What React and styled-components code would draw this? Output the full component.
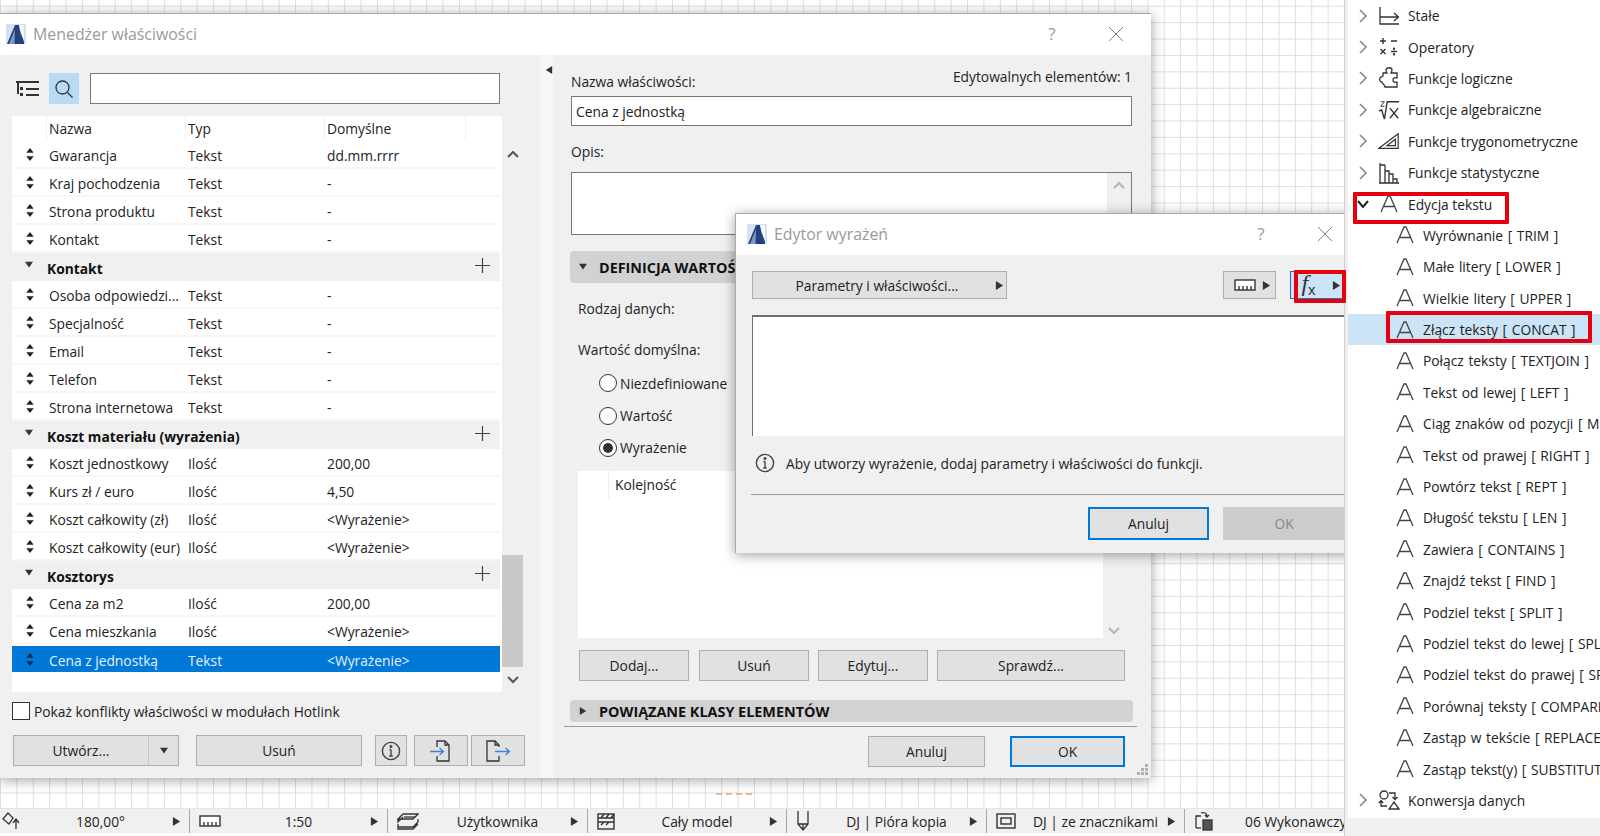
import React from "react";
import styled, { createGlobalStyle } from "styled-components";

const GlobalStyle = createGlobalStyle`
  * { box-sizing: border-box; }
  html, body { margin: 0; padding: 0; background: #fff; }
  body {
    font-family: "Open Sans", "Noto Sans", "Liberation Sans", sans-serif;
    font-size: 13.8px;
    color: #222;
  }
`;

const propertyGroups = [
  {
    rows: [
      ["Gwarancja", "Tekst", "dd.mm.rrrr"],
      ["Kraj pochodzenia", "Tekst", "-"],
      ["Strona produktu", "Tekst", "-"],
      ["Kontakt", "Tekst", "-"],
    ],
  },
  {
    title: "Kontakt",
    rows: [
      ["Osoba odpowiedzi...", "Tekst", "-"],
      ["Specjalność", "Tekst", "-"],
      ["Email", "Tekst", "-"],
      ["Telefon", "Tekst", "-"],
      ["Strona internetowa", "Tekst", "-"],
    ],
  },
  {
    title: "Koszt materiału (wyrażenia)",
    rows: [
      ["Koszt jednostkowy", "Ilość", "200,00"],
      ["Kurs zł / euro", "Ilość", "4,50"],
      ["Koszt całkowity (zł)", "Ilość", "<Wyrażenie>"],
      ["Koszt całkowity (eur)", "Ilość", "<Wyrażenie>"],
    ],
  },
  {
    title: "Kosztorys",
    rows: [
      ["Cena za m2", "Ilość", "200,00"],
      ["Cena mieszkania", "Ilość", "<Wyrażenie>"],
      ["Cena z jednostką", "Tekst", "<Wyrażenie>", true],
    ],
  },
];

const textFunctions = [
  "Wyrównanie [ TRIM ]",
  "Małe litery [ LOWER ]",
  "Wielkie litery [ UPPER ]",
  "Złącz teksty [ CONCAT ]",
  "Połącz teksty [ TEXTJOIN ]",
  "Tekst od lewej [ LEFT ]",
  "Ciąg znaków od pozycji [ MID ]",
  "Tekst od prawej [ RIGHT ]",
  "Powtórz tekst [ REPT ]",
  "Długość tekstu [ LEN ]",
  "Zawiera [ CONTAINS ]",
  "Znajdź tekst [ FIND ]",
  "Podziel tekst [ SPLIT ]",
  "Podziel tekst do lewej [ SPLITLEFT ]",
  "Podziel tekst do prawej [ SPLITRIGHT ]",
  "Porównaj teksty [ COMPARE ]",
  "Zastąp w tekście [ REPLACE ]",
  "Zastąp tekst(y) [ SUBSTITUTE ]",
];

const Page = styled.div`
  position: relative;
  width: 1600px;
  height: 836px;
  display: grid;
  grid-template-columns: 1344px 256px;
  overflow: hidden;
`;

const LeftColumn = styled.div`
  display: flex;
  flex-direction: column;
  min-width: 0;
`;

const Canvas = styled.div`
  position: relative;
  flex: 1;
  overflow: hidden;
  background-color: #fff;
  background-image: linear-gradient(to right, #dedede 1px, transparent 1px),
    linear-gradient(to bottom, #dedede 1px, transparent 1px);
  background-size: 16.4px 16.4px;
  background-position: 0 5.8px;
`;

const CanvasMark = styled.div`
  position: absolute;
  left: 716px;
  top: 793px;
  width: 36px;
  border-top: 2px dashed #eeb68c;
`;

const Window = styled.div`
  position: absolute;
  left: ${({ $x }) => $x}px;
  top: ${({ $y }) => $y}px;
  width: ${({ $w }) => $w}px;
  height: ${({ $h }) => $h}px;
  display: flex;
  flex-direction: column;
  background: #f0f0f0;
  border-top: 1px solid #a9a9a9;
  border-left: ${({ $framed }) => ($framed ? "1px solid #a9a9a9" : "none")};
  box-shadow: 0 2px 12px rgba(0, 0, 0, 0.38);
`;

const TitleBar = styled.div`
  flex: none;
  height: 41px;
  display: flex;
  align-items: center;
  background: #fff;
  padding: 0 26px 2px ${({ $pad }) => $pad}px;
`;

const TitleText = styled.div`
  flex: 1;
  margin-left: 7px;
  font-size: 15.9px;
  color: #9a9a9a;
`;

const HelpMark = styled.span`
  width: 18px;
  margin-right: 46px;
  text-align: center;
  font-size: 17px;
  color: #9a9a9a;
`;

const WindowBody = styled.div`
  flex: 1;
  display: flex;
  min-height: 0;
`;

const LeftPane = styled.div`
  flex: none;
  width: 540px;
  padding-top: 18px;
`;

const SearchBar = styled.div`
  display: flex;
  align-items: center;
  height: 31px;
  padding-left: 16px;
`;

const ViewToggle = styled.div`
  width: 30px;
  height: 31px;
  margin: 0 11px 0 9px;
  display: flex;
  align-items: center;
  justify-content: center;
  background: #b9daf4;
`;

const SearchInput = styled.div`
  width: 410px;
  height: 31px;
  background: #fff;
  border: 1px solid #7a7a7a;
`;

const ListArea = styled.div`
  display: flex;
  margin: 12px 17px 0 12px;
  height: 576px;
`;

const List = styled.div`
  width: 490px;
  background: #fff;
`;

const listColumns = "34px 139px 139px 141px 1fr";

const ListHeader = styled.div`
  display: grid;
  grid-template-columns: ${listColumns};
  height: 25px;
  align-items: stretch;
  width: 488px;
`;

const HeaderCell = styled.div`
  display: flex;
  align-items: center;
  padding-left: 2px;
  border-left: ${({ $first }) => ($first ? "none" : "1px solid #f0f0f0")};
`;

const PropertyRow = styled.div`
  display: grid;
  grid-template-columns: ${listColumns};
  align-items: center;
  height: 28px;
  width: 488px;
  background: #fff;
  border-bottom: 2px solid #f6f6f6;
  color: #222;
  ${({ $selected }) =>
    $selected &&
    `
    background: #0078d7;
    border-top: 1px solid #fff;
    border-bottom: 1px solid #fff;
    color: #e4f1fc;
  `}
`;

const RowGrip = styled.div`
  display: flex;
  justify-content: center;
  padding-left: 1px;
  color: ${({ $selected }) => ($selected ? "#0b2a45" : "#222")};
`;

const RowCell = styled.div`
  padding: 2px 0 0 3px;
  white-space: nowrap;
`;

const GroupRow = styled.div`
  display: flex;
  align-items: center;
  height: 28px;
  width: 488px;
  background: #f0f0f0;
  font-weight: 700;
  color: #111;
`;

const GroupCaret = styled.div`
  width: 34px;
  display: flex;
  justify-content: center;
  margin-top: -4px;
`;

const GroupName = styled.div`
  flex: 1;
  padding: 2px 0 0 1px;
`;

const GroupAdd = styled.div`
  width: 35px;
  display: flex;
  justify-content: center;
  margin-top: -3px;
`;

const ScrollColumn = styled.div`
  width: 21px;
  display: flex;
  flex-direction: column;
  color: #555;
`;

const ScrollArrow = styled.div`
  flex: none;
  height: ${({ $h }) => $h}px;
  display: flex;
  align-items: center;
  justify-content: center;
`;

const ScrollThumb = styled.div`
  flex: none;
  height: 112px;
  background: #c8c8c8;
`;

const Spacer = styled.div`
  flex: 1;
`;

const CheckRow = styled.div`
  display: flex;
  align-items: center;
  gap: 4px;
  height: 18px;
  margin: 10px 0 0 12px;
`;

const CheckBox = styled.div`
  width: 18px;
  height: 18px;
  background: #fff;
  border: 1px solid #333;
`;

const CheckLabel = styled.div`
  padding-top: 1px;
  white-space: nowrap;
`;

const ButtonRow = styled.div`
  display: flex;
  margin: ${({ $m }) => $m};
  justify-content: ${({ $end }) => ($end ? "flex-end" : "flex-start")};
`;

const Button = styled.div`
  flex: none;
  width: ${({ $w }) => $w}px;
  height: ${({ $h }) => $h || 31}px;
  margin-right: ${({ $mr }) => $mr || 0}px;
  display: flex;
  align-items: center;
  justify-content: center;
  background: ${({ $disabled, $active }) =>
    $disabled ? "#cccccc" : $active ? "#cce4f7" : "#e1e1e1"};
  border: ${({ $primary, $disabled, $active }) =>
    $primary
      ? "2px solid #0078d7"
      : $disabled
      ? "none"
      : $active
      ? "1px solid #2a6fb3"
      : "1px solid #adadad"};
  color: ${({ $disabled }) => ($disabled ? "#888" : "#222")};
`;

const SplitLabel = styled.div`
  flex: 1;
  text-align: center;
`;

const SplitCaret = styled.div`
  width: 30px;
  height: 100%;
  display: flex;
  align-items: center;
  justify-content: center;
  border-left: 1px solid #c4c4c4;
`;

const MenuCaret = styled.div`
  flex: none;
  width: 14px;
  display: flex;
  justify-content: center;
`;

const Sash = styled.div`
  flex: none;
  width: 13px;
  padding: 11px 0 0 5px;
  background: #f6f6f6;
  color: #222;
`;

const RightPane = styled.div`
  flex: 1;
  position: relative;
  padding: 0 19px 0 18px;
  min-width: 0;
`;

const NameRow = styled.div`
  display: flex;
  justify-content: space-between;
  height: 41px;
  padding-top: 12px;
`;

const NameLabel = styled.div`
  padding-top: 5px;
`;

const TextInput = styled.div`
  height: 30px;
  padding-left: 4px;
  display: flex;
  align-items: center;
  background: #fff;
  border: 1px solid #777;
`;

const FieldLabel = styled.div`
  height: 20px;
  line-height: 20px;
  margin: ${({ $m }) => $m};
`;

const NoteBox = styled.div`
  height: 63px;
  margin-top: 10px;
  display: flex;
  justify-content: flex-end;
  background: #fff;
  border: 1px solid #777;
`;

const NoteScroll = styled.div`
  width: 24px;
  padding-top: 8px;
  display: flex;
  justify-content: center;
  background: #f0f0f0;
  color: #b5b5b5;
`;

const SectionBar = styled.div`
  height: ${({ $h }) => $h}px;
  margin: ${({ $m }) => $m};
  padding-left: 9px;
  display: flex;
  align-items: center;
  gap: 12px;
  border-radius: 4px;
  background: #d2d2d2;
  font-weight: 700;
  font-size: 14.4px;
  color: #111;
  white-space: nowrap;
`;

const RadioRow = styled.div`
  display: flex;
  align-items: center;
  gap: 3px;
  height: 32.4px;
  padding-left: 28px;
`;

const Radio = styled.div`
  width: 18px;
  height: 18px;
  display: flex;
  align-items: center;
  justify-content: center;
  border-radius: 50%;
  background: #fff;
  border: 1px solid #333;
  &::after {
    content: "";
    display: ${({ $checked }) => ($checked ? "block" : "none")};
    width: 10px;
    height: 10px;
    border-radius: 50%;
    background: #333;
  }
`;

const OrderArea = styled.div`
  display: flex;
  height: 167px;
  margin: 7px 8px 0 7px;
`;

const OrderTable = styled.div`
  flex: 1;
  padding-left: 30px;
  background: #fff;
`;

const OrderHead = styled.div`
  height: 28px;
  line-height: 28px;
  padding-left: 6px;
  border-left: 1px solid #eee;
`;

const OrderScroll = styled.div`
  width: 21px;
  padding: 0 0 3px 0;
  display: flex;
  align-items: flex-end;
  justify-content: center;
  color: #b5b5b5;
`;

const FootRule = styled.div`
  height: 1px;
  margin: ${({ $m }) => $m};
  background: #9a9a9a;
`;

const Grip = styled.div`
  position: absolute;
  right: 2px;
  bottom: 2px;
  color: #b0b0b0;
  line-height: 0;
`;

const ExprBody = styled.div`
  flex: 1;
  padding: 16px 6px 0 16px;
`;

const ExprToolbar = styled.div`
  display: flex;
  align-items: center;
  height: 28px;
`;

const ParamLabel = styled.div`
  flex: 1;
  padding-left: 9px;
  text-align: center;
`;

const RulerButtonInner = styled.div`
  flex: 1;
  display: flex;
  align-items: center;
  justify-content: space-between;
  padding: 0 4px 0 10px;
`;

const FxGlyph = styled.span`
  font-family: "Liberation Serif", serif;
  font-style: italic;
  font-size: 24px;
  line-height: 1;
  color: #333;
  margin: -4px 0 0 -2px;
`;

const FxSub = styled.span`
  font-family: "Liberation Sans", sans-serif;
  font-size: 15px;
  color: #333;
  margin: 8px 16px 0 0;
`;

const ExprArea = styled.div`
  height: 121px;
  margin-top: 16px;
  background: #fff;
  border-top: 2px solid #6f6f6f;
  border-left: 1px solid #6f6f6f;
`;

const HintRow = styled.div`
  display: flex;
  align-items: center;
  gap: 11px;
  height: 28px;
  margin: 13px 0 0 3px;
  white-space: nowrap;
`;

const Panel = styled.div`
  display: flex;
  flex-direction: column;
  position: relative;
  background: #f0f0f0;
  border-left: 1px solid #cfcfcf;
  padding-left: 3px;
`;

const Tree = styled.div`
  height: 818px;
  background: #fff;
  overflow: hidden;
`;

const TreeRow = styled.div`
  height: 31.4px;
  display: flex;
  align-items: center;
  padding-left: ${({ $child }) => ($child ? 48 : 9)}px;
  background: ${({ $selected }) => ($selected ? "#cce4f7" : "transparent")};
  white-space: nowrap;
  word-spacing: ${({ $child }) => ($child ? 1 : 0)}px;
  color: #222;
`;

const TreeChevron = styled.div`
  flex: none;
  width: 12px;
  margin-right: 9px;
  display: flex;
  justify-content: center;
  color: ${({ $open }) => ($open ? "#222" : "#888")};
`;

const TreeIcon = styled.div`
  flex: none;
  width: ${({ $child }) => ($child ? 18 : 22)}px;
  margin-right: ${({ $child }) => ($child ? 9 : 8)}px;
  display: flex;
  justify-content: center;
  color: #333;
`;

const StatusBar = styled.div`
  flex: none;
  height: 25px;
  display: flex;
  background: #f0f0f0;
  border-top: 1px solid #e4e4e4;
  overflow: hidden;
`;

const StatusFoot = styled.div`
  flex: none;
  height: 3px;
  background: #fafafa;
`;

const StatusCell = styled.div`
  flex: ${({ $w }) => ($w ? `none` : 1)};
  width: ${({ $w }) => ($w ? `${$w}px` : "auto")};
  display: flex;
  align-items: center;
  padding-left: ${({ $first }) => ($first ? 1 : 9)}px;
  border-right: ${({ $w }) => ($w ? "1px solid #a8a8a8" : "none")};
  min-width: 0;
  color: #333;
`;

const StatusIcon = styled.div`
  flex: none;
  width: 36px;
  display: flex;
  color: #333;
`;

const StatusText = styled.div`
  flex: 1;
  text-align: ${({ $start }) => ($start ? "left" : "center")};
  padding-left: ${({ $start }) => ($start ? 15 : 0)}px;
  white-space: nowrap;
  overflow: hidden;
  color: #222;
`;

const StatusArrow = styled.div`
  flex: none;
  width: 25px;
  display: flex;
  justify-content: center;
`;

const RedBox = styled.div`
  position: absolute;
  left: ${({ $x }) => $x}px;
  top: ${({ $y }) => $y}px;
  width: ${({ $w }) => $w}px;
  height: ${({ $h }) => $h}px;
  border: 4px solid #e6000f;
  border-radius: 1px;
  pointer-events: none;
`;

/* icons */
const Svg = ({ w = 16, h = 16, vb, children, sw = 1.2 }) => (
  <svg
    width={w}
    height={h}
    viewBox={vb || `0 0 ${w} ${h}`}
    fill="none"
    stroke="currentColor"
    strokeWidth={sw}
    style={{ display: "block" }}
  >
    {children}
  </svg>
);

const AppLogo = () => (
  <svg width="20" height="20" viewBox="0 0 20 20" style={{ display: "block", flex: "none" }}>
    <rect width="20" height="20" fill="#d9e0ee" />
    <path d="M1 20 L9 1 L13 1 L18 18 L18 20 Z" fill="#23407f" />
    <path d="M3 20 L9 5 L8.5 20 Z" fill="#7f97c6" />
    <path d="M13 1 Q14 10 18 16 L18 1 Z" fill="#f4f6fa" />
  </svg>
);

const Close = () => (
  <Svg w={18} h={18} sw={1}>
    <path d="M2 2 L16 16 M16 2 L2 16" stroke="#808080" />
  </Svg>
);

const TreeListIcon = () => (
  <Svg w={24} h={18} sw={2}>
    <path d="M0 2 H23 M2 2 V14 M10 9 H23 M10 15 H23" stroke="#333" />
    <rect x="4" y="7" width="3" height="3" fill="#333" stroke="none" />
    <rect x="4" y="13" width="3" height="3" fill="#333" stroke="none" />
  </Svg>
);

const Search = () => (
  <Svg w={20} h={20} sw={1.3}>
    <circle cx="8.5" cy="8.5" r="6.5" stroke="#333" />
    <path d="M13.5 13.5 L18.5 18.5" stroke="#333" />
  </Svg>
);

const SortGrip = () => (
  <svg width="8" height="13" viewBox="0 0 8 14" fill="currentColor" style={{ display: "block" }}>
    <path d="M4 0 L8 5 H0 Z M0 9 H8 L4 14 Z" />
  </svg>
);

const Caret = ({ dir = "down", color = "#333", s = 8 }) => {
  const points = {
    down: "0,1 10,1 5,8",
    right: "1,0 9,5 1,10",
    left: "9,0 1,5 9,10",
  };
  return (
    <svg width={s} height={s} viewBox="0 0 10 10" style={{ display: "block", flex: "none" }}>
      <polygon points={points[dir]} fill={color} />
    </svg>
  );
};

const Plus = () => (
  <Svg w={15} h={15} sw={1.2}>
    <path d="M7.5 0 V15 M0 7.5 H15" stroke="#444" />
  </Svg>
);

const ChevronV = ({ up }) => (
  <Svg w={12} h={8} sw={2}>
    <path d={up ? "M1 7 L6 2 L11 7" : "M1 1 L6 6 L11 1"} />
  </Svg>
);

const InfoCircle = () => (
  <Svg w={20} h={20} sw={1.4}>
    <circle cx="10" cy="10" r="8.6" stroke="#444" />
    <path d="M10 8.5 V15 M8.2 15 H11.8 M8.5 8.5 H10" stroke="#444" />
    <circle cx="10" cy="5.6" r="0.8" fill="#444" stroke="#444" />
  </Svg>
);

const DocIn = () => (
  <Svg w={24} h={24} sw={1.3}>
    <path d="M8 8 V2 H16 L20 6 V22 H8 V17" stroke="#333" />
    <path d="M16 2 V6 H20" stroke="#333" />
    <path d="M1 12.5 H14 M10.5 9 L14.5 12.5 L10.5 16" stroke="#3f83d6" />
  </Svg>
);

const DocOut = () => (
  <Svg w={26} h={24} sw={1.3}>
    <path d="M14 8 V6 L10 2 H2 V22 H14 V17" stroke="#333" />
    <path d="M10 2 V6 H14" stroke="#333" />
    <path d="M10 12.5 H24 M20.5 9 L24.5 12.5 L20.5 16" stroke="#3f83d6" />
  </Svg>
);

const Ruler = () => (
  <Svg w={22} h={12} sw={1.4}>
    <rect x="1" y="1" width="20" height="10" fill="#fff" stroke="#333" />
    <path d="M5 11 V7 M9 11 V7 M13 11 V7 M17 11 V7" stroke="#333" />
  </Svg>
);

const AngleIcon = () => (
  <Svg w={22} h={20} sw={1.3}>
    <path d="M2 8 L7 2 L12 7 L8 13 Z" />
    <path d="M15 18 V9 M12 12 L15 8 L18 12" />
  </Svg>
);

const LayersIcon = () => (
  <Svg w={22} h={20} sw={1.3}>
    <path d="M1 8 L6 3 H21 L16 8 Z M1 8 V11 L6 6 M1 13 L1 16 H16 L21 11 V8 M1 16 L1 18 H16 L21 13" />
    <path d="M7 6 H18" />
  </Svg>
);

const ClapIcon = () => (
  <Svg w={18} h={20} sw={1.4}>
    <rect x="1" y="3" width="16" height="15" />
    <path d="M1 7 H17 M1 11 H17 M4 7 L7 3 M9 7 L12 3 M14 7 L17 3 M4 14 L7 11 M9 14 L12 11" />
  </Svg>
);

const PenIcon = () => (
  <Svg w={14} h={22} sw={1.3}>
    <path d="M2 1 V14 L7 20 L12 14 V1 M2 14 H12 M7 14 V20" />
  </Svg>
);

const ViewIcon = () => (
  <Svg w={20} h={18} sw={1.4}>
    <rect x="1" y="2" width="18" height="14" />
    <rect x="5" y="6" width="10" height="6" />
  </Svg>
);

const BoardIcon = () => (
  <Svg w={20} h={20} sw={1.3}>
    <path d="M2 17 V5 H7 M7 2 C10 1 13 2 13 5 M11 4 L13 6 L15 4" />
    <rect x="9" y="9" width="9" height="10" fill="#555" stroke="#333" />
    <path d="M2 17 H7" />
  </Svg>
);

const ChevronRight = () => (
  <Svg w={10} h={14} sw={1.6}>
    <path d="M2 1 L8 7 L2 13" />
  </Svg>
);

const ChevronDown = () => (
  <Svg w={12} h={9} sw={2}>
    <path d="M1 1 L6 7 L11 1" />
  </Svg>
);

const ConstIcon = () => (
  <Svg w={22} h={20} sw={1.3}>
    <path d="M2 1 V18 H21 M2 11 H20 M16 7 L20.5 11 L16 15" />
  </Svg>
);

const OperatorsIcon = () => (
  <Svg w={20} h={20} sw={1.4}>
    <path d="M4 1 V7 M1 4 H7 M12 4 H18 M1.5 12 L6.5 17 M6.5 12 L1.5 17 M12 14.5 H18" />
    <circle cx="15" cy="11.8" r="0.5" fill="currentColor" />
    <circle cx="15" cy="17.2" r="0.5" fill="currentColor" />
  </Svg>
);

const PuzzleIcon = () => (
  <Svg w={22} h={22} sw={1.3}>
    <path d="M8 3 C8 0 14 0 14 3 C14 5 13 5 13 6 H19 V11 C17 10 15 11 15 13 C15 15 17 16 19 15 V20 H7 C7 17 4 17 4 15 C2 15 1 13 2 11 C3 9 5 10 5 9 V6 H9 C9 5 8 5 8 3 Z" />
  </Svg>
);

const RootIcon = () => (
  <Svg w={24} h={22} sw={1.5}>
    <path d="M1 12 L4 11 L7 21 L10 2 H23" />
    <path d="M13 9 L22 20 M22 9 L13 20" />
    <path d="M3 2 H7 L3 7 H7" strokeWidth="1" />
  </Svg>
);

const SetSquareIcon = () => (
  <Svg w={24} h={18} sw={1.3}>
    <path d="M1 17 L22 1 V17 Z M10 14 L19 7 V14 Z" />
  </Svg>
);

const BarsIcon = () => (
  <Svg w={22} h={22} sw={1.3}>
    <path d="M1 21 H21 M2 1 V21 M7 3 H2 M7 3 V21 M7 9 H11 V21 M11 12 H15 V21 M15 17 H19 V21" />
  </Svg>
);

const LetterIcon = () => (
  <svg width="18" height="18" viewBox="0 0 18 18" fill="none" stroke="#444" strokeWidth="1.3" style={{ display: "block" }}>
    <path d="M1 17 L8 1 H10 L17 17 M4 11.5 H14" />
  </svg>
);

const ConvertIcon = () => (
  <Svg w={22} h={20} sw={1.3}>
    <circle cx="6" cy="5" r="4" />
    <path d="M11 3 H17 V9 M14.5 7 L17 9.5 L19.5 7 M9 16 H3 V11 M.8 13 L3 10.5 L5.2 13 M16 12 L21 19 H11 Z" />
  </Svg>
);

const GripDots = () => (
  <svg width="14" height="14" viewBox="0 0 14 14" fill="currentColor" style={{ display: "block" }}>
    <rect x="10" y="2" width="3" height="3" />
    <rect x="6" y="6" width="3" height="3" />
    <rect x="10" y="6" width="3" height="3" />
    <rect x="2" y="10" width="3" height="3" />
    <rect x="6" y="10" width="3" height="3" />
    <rect x="10" y="10" width="3" height="3" />
  </svg>
);

const topTree = [
  ["Stałe", <ConstIcon />],
  ["Operatory", <OperatorsIcon />],
  ["Funkcje logiczne", <PuzzleIcon />],
  ["Funkcje algebraiczne", <RootIcon />],
  ["Funkcje trygonometryczne", <SetSquareIcon />],
  ["Funkcje statystyczne", <BarsIcon />],
];

const statusItems = [
  { icon: <AngleIcon />, text: "180,00°", w: 190, first: true },
  { icon: <Ruler />, text: "1:50", w: 198 },
  { icon: <LayersIcon />, text: "Użytkownika", w: 200 },
  { icon: <ClapIcon />, text: "Cały model", w: 199 },
  { icon: <PenIcon />, text: "DJ | Pióra kopia", w: 200 },
  { icon: <ViewIcon />, text: "DJ | ze znacznikami", w: 198 },
];

const PropertyList = () => (
  <List>
    <ListHeader>
      <HeaderCell $first />
      <HeaderCell>Nazwa</HeaderCell>
      <HeaderCell>Typ</HeaderCell>
      <HeaderCell>Domyślne</HeaderCell>
      <HeaderCell />
    </ListHeader>
    {propertyGroups.map((group, idx) => (
      <React.Fragment key={idx}>
        {group.title && (
          <GroupRow>
            <GroupCaret>
              <Caret />
            </GroupCaret>
            <GroupName>{group.title}</GroupName>
            <GroupAdd>
              <Plus />
            </GroupAdd>
          </GroupRow>
        )}
        {group.rows.map(([name, type, value, selected]) => (
          <PropertyRow key={name} $selected={selected}>
            <RowGrip $selected={selected}>
              <SortGrip />
            </RowGrip>
            <RowCell>{name}</RowCell>
            <RowCell>{type}</RowCell>
            <RowCell>{value}</RowCell>
          </PropertyRow>
        ))}
      </React.Fragment>
    ))}
  </List>
);

const ManagerDialog = () => (
  <Window $x={0} $y={13} $w={1151} $h={765}>
    <TitleBar $pad={6}>
      <AppLogo />
      <TitleText>Menedżer właściwości</TitleText>
      <HelpMark>?</HelpMark>
      <Close />
    </TitleBar>
    <WindowBody>
      <LeftPane>
        <SearchBar>
          <TreeListIcon />
          <ViewToggle>
            <Search />
          </ViewToggle>
          <SearchInput />
        </SearchBar>
        <ListArea>
          <PropertyList />
          <ScrollColumn>
            <ScrollArrow $h={25} />
            <ScrollArrow $h={26}>
              <ChevronV up />
            </ScrollArrow>
            <Spacer />
            <ScrollThumb />
            <ScrollArrow $h={25}>
              <ChevronV />
            </ScrollArrow>
          </ScrollColumn>
        </ListArea>
        <CheckRow>
          <CheckBox />
          <CheckLabel>Pokaż konflikty właściwości w modułach Hotlink</CheckLabel>
        </CheckRow>
        <ButtonRow $m="15px 0 0 13px">
          <Button $w={166} $mr={17}>
            <SplitLabel>Utwórz...</SplitLabel>
            <SplitCaret>
              <Caret />
            </SplitCaret>
          </Button>
          <Button $w={166} $mr={13}>
            Usuń
          </Button>
          <Button $w={32} $mr={7}>
            <InfoCircle />
          </Button>
          <Button $w={54} $mr={3}>
            <DocIn />
          </Button>
          <Button $w={54}>
            <DocOut />
          </Button>
        </ButtonRow>
      </LeftPane>
      <Sash>
        <Caret dir="left" />
      </Sash>
      <RightPane>
        <NameRow>
          <NameLabel>Nazwa właściwości:</NameLabel>
          <div>Edytowalnych elementów: 1</div>
        </NameRow>
        <TextInput>Cena z jednostką</TextInput>
        <FieldLabel $m="16px 0 0">Opis:</FieldLabel>
        <NoteBox>
          <NoteScroll>
            <ChevronV up />
          </NoteScroll>
        </NoteBox>
        <SectionBar $h={32} $m="16px -1px 0 -1px">
          <Caret />
          DEFINICJA WARTOŚCI
        </SectionBar>
        <FieldLabel $m="16px 0 0 7px">Rodzaj danych:</FieldLabel>
        <FieldLabel $m="21px 0 7px 7px">Wartość domyślna:</FieldLabel>
        <RadioRow>
          <Radio />
          Niezdefiniowane
        </RadioRow>
        <RadioRow>
          <Radio />
          Wartość
        </RadioRow>
        <RadioRow>
          <Radio $checked />
          Wyrażenie
        </RadioRow>
        <OrderArea>
          <OrderTable>
            <OrderHead>Kolejność</OrderHead>
          </OrderTable>
          <OrderScroll>
            <ChevronV />
          </OrderScroll>
        </OrderArea>
        <ButtonRow $m="12px 0 0 8px">
          <Button $w={110} $mr={10}>
            Dodaj...
          </Button>
          <Button $w={110} $mr={9}>
            Usuń
          </Button>
          <Button $w={110} $mr={9}>
            Edytuj...
          </Button>
          <Button $w={188}>Sprawdź...</Button>
        </ButtonRow>
        <SectionBar $h={22} $m="19px -1px 0 -1px">
          <Caret dir="right" />
          POWIĄZANE KLASY ELEMENTÓW
        </SectionBar>
        <FootRule $m="4px -5px 0 -7px" />
        <ButtonRow $m="9px 7px 0 0" $end>
          <Button $w={117} $mr={25}>
            Anuluj
          </Button>
          <Button $w={115} $primary>
            OK
          </Button>
        </ButtonRow>
        <Grip>
          <GripDots />
        </Grip>
      </RightPane>
    </WindowBody>
  </Window>
);

const ExpressionDialog = () => (
  <Window $x={735} $y={213} $w={625} $h={340} $framed>
    <TitleBar $pad={11}>
      <AppLogo />
      <TitleText>Edytor wyrażeń</TitleText>
      <HelpMark>?</HelpMark>
      <Close />
    </TitleBar>
    <ExprBody>
      <ExprToolbar>
        <Button $w={255} $h={28} $mr={216}>
          <ParamLabel>Parametry i właściwości...</ParamLabel>
          <MenuCaret>
            <Caret dir="right" s={9} />
          </MenuCaret>
        </Button>
        <Button $w={53} $h={28} $mr={14}>
          <RulerButtonInner>
            <Ruler />
            <Caret dir="right" s={9} />
          </RulerButtonInner>
        </Button>
        <Button $w={64} $h={28} $active>
          <FxGlyph>f</FxGlyph>
          <FxSub>x</FxSub>
          <Caret dir="right" s={9} />
        </Button>
      </ExprToolbar>
      <ExprArea />
      <HintRow>
        <InfoCircle />
        Aby utworzy wyrażenie, dodaj parametry i właściwości do funkcji.
      </HintRow>
      <FootRule $m="17px 0 0 -1px" />
      <ButtonRow $m="12px 0 0 336px">
        <Button $w={121} $h={33} $mr={14} $primary>
          Anuluj
        </Button>
        <Button $w={122} $h={33} $disabled>
          OK
        </Button>
      </ButtonRow>
    </ExprBody>
  </Window>
);

const FunctionPanel = () => (
  <Panel>
    <Tree>
      {topTree.map(([label, icon]) => (
        <TreeRow key={label}>
          <TreeChevron>
            <ChevronRight />
          </TreeChevron>
          <TreeIcon>{icon}</TreeIcon>
          {label}
        </TreeRow>
      ))}
      <TreeRow>
        <TreeChevron $open>
          <ChevronDown />
        </TreeChevron>
        <TreeIcon>
          <LetterIcon />
        </TreeIcon>
        Edycja tekstu
      </TreeRow>
      {textFunctions.map((label) => (
        <TreeRow key={label} $child $selected={label.startsWith("Złącz")}>
          <TreeIcon $child>
            <LetterIcon />
          </TreeIcon>
          {label}
        </TreeRow>
      ))}
      <TreeRow>
        <TreeChevron>
          <ChevronRight />
        </TreeChevron>
        <TreeIcon>
          <ConvertIcon />
        </TreeIcon>
        Konwersja danych
      </TreeRow>
    </Tree>
  </Panel>
);

const App = () => (
  <>
    <GlobalStyle />
    <Page>
      <LeftColumn>
        <Canvas>
          <CanvasMark />
          <ManagerDialog />
          <ExpressionDialog />
        </Canvas>
        <StatusBar>
          {statusItems.map((item) => (
            <StatusCell key={item.text} $w={item.w} $first={item.first}>
              <StatusIcon>{item.icon}</StatusIcon>
              <StatusText>{item.text}</StatusText>
              <StatusArrow>
                <Caret dir="right" s={9} />
              </StatusArrow>
            </StatusCell>
          ))}
          <StatusCell>
            <StatusIcon>
              <BoardIcon />
            </StatusIcon>
            <StatusText $start>06 Wykonawczy</StatusText>
          </StatusCell>
        </StatusBar>
        <StatusFoot />
      </LeftColumn>
      <FunctionPanel />
      <RedBox $x={1353} $y={192} $w={156} $h={32} />
      <RedBox $x={1386} $y={311} $w={206} $h={32} />
      <RedBox $x={1294} $y={270} $w={52} $h={33} />
    </Page>
  </>
);

export default App;
